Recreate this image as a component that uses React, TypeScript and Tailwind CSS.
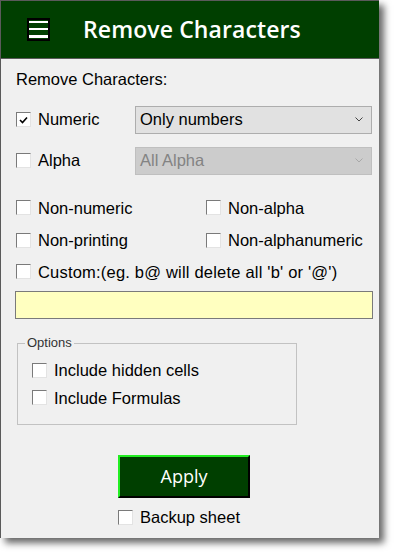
import { useState } from "react";

const Check = ({ checked = false, label, onToggle, className = "" }: { checked?: boolean; label: string; onToggle?: () => void; className?: string }) => (
    <label className={`flex items-center gap-[7px] cursor-default select-none ${className}`} onClick={onToggle}>
        <span className="w-[15px] h-[15px] bg-white border border-t-[#7a7a7a] border-l-[#7a7a7a] border-r-[#e3e3e3] border-b-[#e3e3e3] flex items-center justify-center shrink-0">
            {checked && (
                <svg width="9" height="8" viewBox="0 0 9 8">
                    <path d="M1 4 L3.5 6.5 L8 1.5" fill="none" stroke="#000" strokeWidth="1.6" />
                </svg>
            )}
        </span>
        <span className="text-[16.5px] leading-none text-black whitespace-nowrap">{label}</span>
    </label>
);

const Chevron = ({ color }: { color: string }) => (
    <svg width="8" height="5" viewBox="0 0 8 5" className="shrink-0">
        <path d="M0.5 0.5 L4 4 L7.5 0.5" fill="none" stroke={color} strokeWidth="1" />
    </svg>
);

export default function App() {
    const [numeric, setNumeric] = useState(true);

    return (
        <div className="w-[394px] h-[552px] bg-white font-['Liberation_Sans',Arial,sans-serif]">
            <div className="w-[379px] h-[538px] bg-[#f0f0f0] border border-[#5a5a5a] border-r-0 border-b-0 shadow-[5px_5px_7px_rgba(0,0,0,0.6)] flex flex-col">
                {/* header */}
                <div className="h-[58px] bg-[#003f00] border-b border-[#5a5a5a] flex items-center pl-[26px] shrink-0">
                    <div className="w-[23px] h-[23px] border-2 border-black bg-[#003f00] flex flex-col justify-between py-[1px]">
                        <span className="h-[2px] bg-white" />
                        <span className="h-[2px] bg-white" />
                        <span className="h-[3px] bg-white" />
                    </div>
                    <h1 className="ml-[33px] text-white text-[23px] font-semibold font-['Open_Sans',sans-serif] tracking-[0.1px] leading-none">
                        Remove Characters
                    </h1>
                </div>

                {/* body */}
                <div className="flex flex-col pl-[14px] pr-[6px]">
                    <p className="mt-[12px] pl-[1px] text-[16.5px] leading-none text-black">Remove Characters:</p>

                    <div className="mt-[18px] flex items-center">
                        <div className="w-[120px] pl-[1px]">
                            <Check checked={numeric} label="Numeric" onToggle={() => setNumeric(!numeric)} />
                        </div>
                        <div className="flex-1 mr-[1px] h-[28px] bg-[#e1e1e1] border border-[#adadad] flex items-center justify-between pl-[4px] pr-[8px]">
                            <span className="text-[16.5px] text-black">Only numbers</span>
                            <Chevron color="#444" />
                        </div>
                    </div>

                    <div className="mt-[13px] flex items-center">
                        <div className="w-[120px] pl-[1px]">
                            <Check label="Alpha" />
                        </div>
                        <div className="flex-1 mr-[1px] h-[28px] bg-[#cccccc] border border-[#bfbfbf] flex items-center justify-between pl-[4px] pr-[8px]">
                            <span className="text-[16.5px] text-[#838383]">All Alpha</span>
                            <Chevron color="#a8a8a8" />
                        </div>
                    </div>

                    <div className="mt-[25px] grid grid-cols-[190px_1fr] gap-y-[16px] pl-[1px]">
                        <Check label="Non-numeric" />
                        <Check label="Non-alpha" />
                        <Check label="Non-printing" />
                        <Check label="Non-alphanumeric" />
                    </div>

                    <div className="mt-[15px] pl-[1px] tracking-[0.2px]">
                        <Check label="Custom:(eg. b@ will delete all 'b' or '@')" />
                    </div>

                    <input className="mt-[11px] h-[28px] w-full bg-[#ffffc0] border border-[#7a7a7a] outline-none px-1 text-[16px]" />

                    <fieldset className="mt-[17px] ml-[2px] w-[280px] h-[89px] border border-[#c2c2c2] pl-[14px]">
                        <legend className="ml-[-7px] px-[2px] text-[13px] leading-[14px] text-[#333]">Options</legend>
                        <div className="flex flex-col gap-[11px] mt-[12px]">
                            <Check label="Include hidden cells" />
                            <Check label="Include Formulas" />
                        </div>
                    </fieldset>

                    <div className="mt-[30px] flex flex-col items-start pl-[103px]">
                        <button className="w-[132px] h-[43px] bg-[#003f00] border-2 border-t-[#22ee22] border-l-[#22ee22] border-r-black border-b-black text-white text-[18px] font-['Open_Sans',sans-serif]">
                            Apply
                        </button>
                        <Check className="mt-[11px]" label="Backup sheet" />
                    </div>
                </div>
            </div>
        </div>
    );
}
